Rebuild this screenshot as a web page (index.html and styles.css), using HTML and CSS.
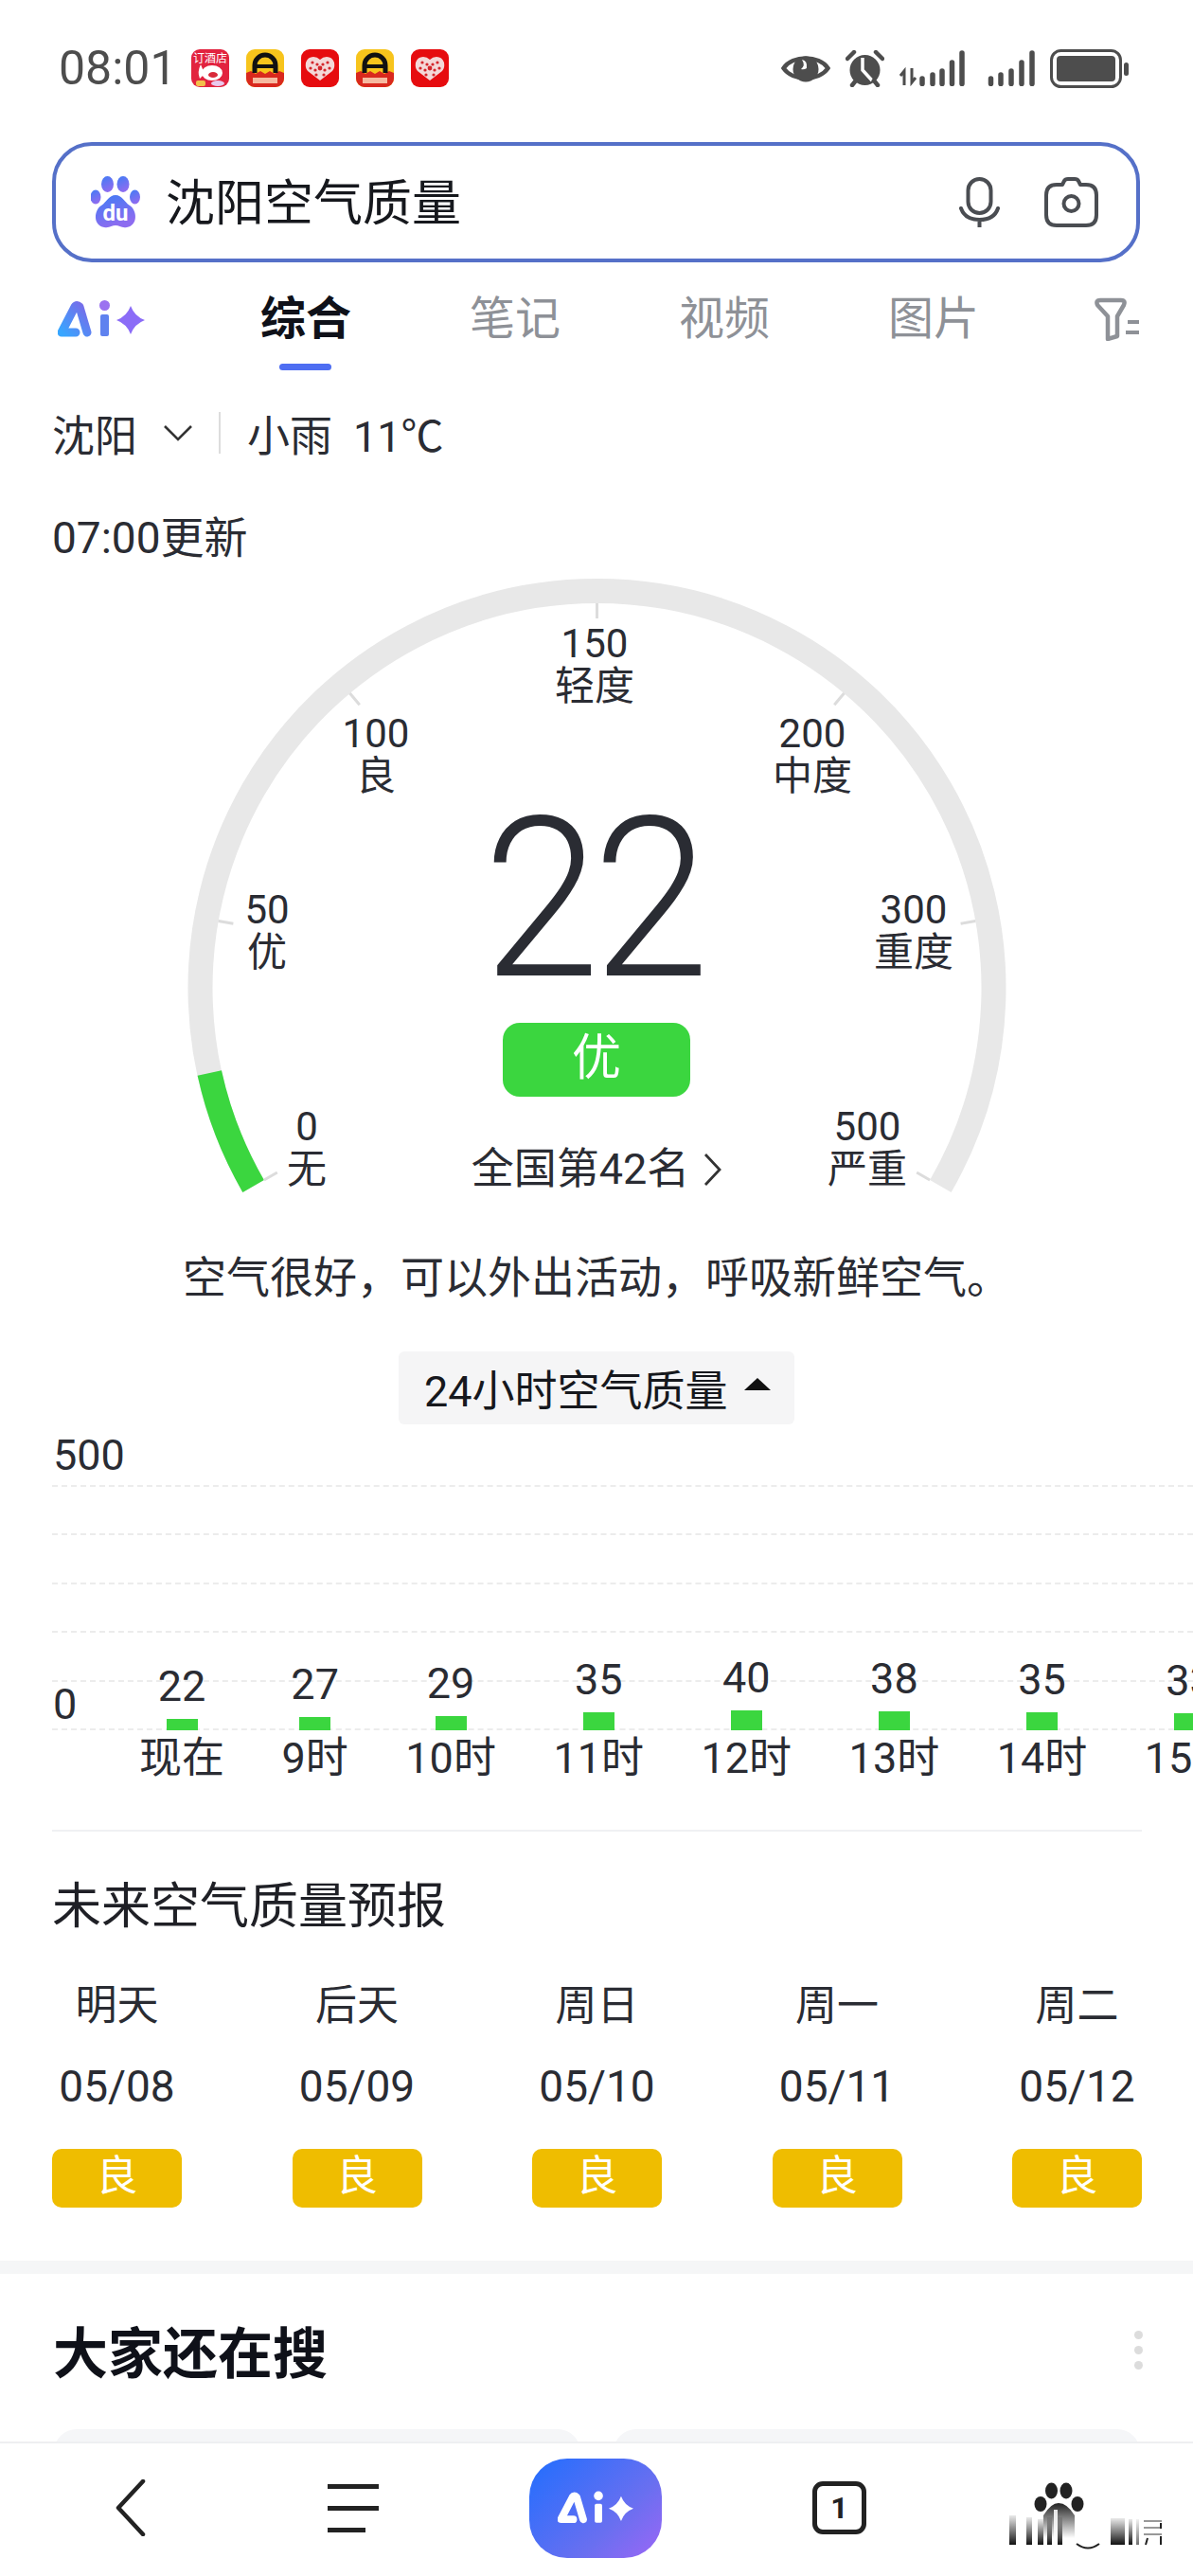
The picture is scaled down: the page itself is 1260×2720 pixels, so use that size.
FILE: index.html
```html
<!DOCTYPE html>
<html lang="zh">
<head>
<meta charset="utf-8">
<meta name="viewport" content="width=device-width, initial-scale=1">
<title>沈阳空气质量</title>
<link rel="stylesheet" href="styles.css">
</head>
<body>

<svg class="defs" width="0" height="0">
  <defs>
    <linearGradient id="aiGrad" x1="0" y1="1" x2="1" y2="0">
      <stop offset="0" stop-color="#38a6ff"/>
      <stop offset="1" stop-color="#7a68e8"/>
    </linearGradient>
    <linearGradient id="duGrad" x1="0" y1="0" x2="0.4" y2="1">
      <stop offset="0" stop-color="#3f7cf5"/>
      <stop offset="1" stop-color="#8d6cf0"/>
    </linearGradient>
    <linearGradient id="fadeDown" x1="0" y1="0" x2="0" y2="1">
      <stop offset="0" stop-color="#222" stop-opacity="0.1"/>
      <stop offset="1" stop-color="#111" stop-opacity="1"/>
    </linearGradient>
    <linearGradient id="fadeUp" x1="0" y1="0" x2="0" y2="1">
      <stop offset="0" stop-color="#222" stop-opacity="1"/>
      <stop offset="1" stop-color="#222" stop-opacity="0"/>
    </linearGradient>
    <symbol id="appTaxi" viewBox="0 0 40 40">
      <rect width="40" height="40" rx="9" fill="#f7c41c"/>
      <path d="M0 25 L5 23 L10 26 L15 23 L20 26 L25 23 L30 26 L35 23 L40 25 V31 A9 9 0 0 1 31 40 H9 A9 9 0 0 1 0 31Z" fill="#d9281e"/>
      <path d="M9 25 V17 A11 11 0 0 1 31 17 V25" fill="none" stroke="#111" stroke-width="5"/>
      <rect x="11" y="16" width="18" height="4" fill="#111"/>
      <rect x="7" y="30" width="26" height="6" fill="#f6b9a0"/>
    </symbol>
    <symbol id="appHeart" viewBox="0 0 40 40">
      <rect width="40" height="40" rx="9" fill="#e60c0f"/>
      <path d="M20 33 L7 23 Q4 20 5 14 Q7 8 13 8 Q17 8 20 11 Q23 8 27 8 Q33 8 35 14 Q36 20 33 23Z" fill="#f4d8d8"/>
      <g fill="#d3262b">
        <circle cx="12" cy="14" r="1.6"/><circle cx="17" cy="16" r="1.6"/><circle cx="23" cy="16" r="1.6"/><circle cx="28" cy="14" r="1.6"/>
        <circle cx="10" cy="20" r="1.6"/><circle cx="15" cy="22" r="1.6"/><circle cx="20" cy="20" r="2.4"/><circle cx="25" cy="22" r="1.6"/><circle cx="30" cy="20" r="1.6"/>
        <circle cx="16" cy="27" r="1.6"/><circle cx="24" cy="27" r="1.6"/>
      </g>
    </symbol>
  </defs>
</svg>

<main class="page">

  <div class="status">
    <span class="time">08:01</span>
    <div class="apps">
      <svg class="app" viewBox="0 0 40 40">
        <rect width="40" height="40" rx="9" fill="#e2233f"/>
        <text class="app-text" x="20" y="14" text-anchor="middle">订酒店</text>
        <ellipse cx="22" cy="25" rx="11" ry="8" fill="#fff"/>
        <path d="M10 16 Q6 24 9 31 L14 26Z" fill="#fff"/>
        <ellipse cx="23" cy="27" rx="5" ry="3" fill="#d92a3a"/>
        <rect x="5" y="33" width="10" height="6" rx="2" fill="#f3c04a"/>
        <ellipse cx="28" cy="36" rx="7" ry="3" fill="#e9c8ec"/>
      </svg>
      <svg class="app"><use href="#appTaxi"/></svg>
      <svg class="app"><use href="#appHeart"/></svg>
      <svg class="app"><use href="#appTaxi"/></svg>
      <svg class="app"><use href="#appHeart"/></svg>
    </div>
    <div class="sys">
      <svg class="ic-eye" viewBox="0 0 52 34">
        <path d="M2.5 17 C12 3 40 3 49.5 17 C40 31 12 31 2.5 17Z" fill="none" stroke="#4d4d4d" stroke-width="4.5"/>
        <circle cx="26" cy="18" r="13.5" fill="#4d4d4d"/>
        <path d="M22 8 Q28 9 27 17 Q24 19 21 18 Q26 14 22 8Z" fill="#fff"/>
      </svg>
      <svg class="ic-alarm" viewBox="0 0 41 39">
        <circle cx="20.5" cy="21" r="16" fill="#4d4d4d"/>
        <path d="M18 8 V21 L28 32" fill="none" stroke="#fff" stroke-width="3.5"/>
        <path d="M2 9 L9 2 M39 9 L32 2 M7 37 L11 32 M34 37 L30 32" stroke="#4d4d4d" stroke-width="4.5" stroke-linecap="round"/>
      </svg>
      <svg class="ic-sig1" viewBox="0 0 70 38">
        <path d="M5 37 V22 L1 27 M13 19 V34 L17 29" fill="none" stroke="#4d4d4d" stroke-width="3"/>
        <path d="M24 30 V35.5 M35 26 V35.5 M45 22 V35.5 M55.5 13 V35.5 M66 3 V35.5" stroke="#4d4d4d" stroke-width="5.5" stroke-linecap="round"/>
      </svg>
      <svg class="ic-sig2" viewBox="0 0 50 38">
        <path d="M3.5 30 V35.5 M14 26 V35.5 M25 22 V35.5 M36 13 V35.5 M47 3 V35.5" stroke="#4d4d4d" stroke-width="5.5" stroke-linecap="round"/>
      </svg>
      <svg class="ic-batt" viewBox="0 0 83 41">
        <rect x="1.5" y="1.5" width="73" height="38" rx="10" fill="none" stroke="#4d4d4d" stroke-width="3"/>
        <rect x="7" y="7" width="62" height="27" rx="4" fill="#4d4d4d"/>
        <rect x="78" y="14" width="5" height="14" rx="2.5" fill="#4d4d4d"/>
      </svg>
    </div>
  </div>

  <div class="searchbox">
    <svg class="du" viewBox="0 0 52 55">
      <g fill="url(#duGrad)">
        <ellipse cx="17.5" cy="8.5" rx="6.5" ry="8.5"/>
        <ellipse cx="34" cy="8.5" rx="6.5" ry="8.5"/>
        <ellipse cx="5" cy="22" rx="5.5" ry="7.5"/>
        <ellipse cx="46.5" cy="22" rx="5.5" ry="7.5"/>
        <path d="M26 20 C33 20 35 27 41 31 C49 36 50 52 38 54 C32 55 30 52 26 52 C22 52 20 55 14 54 C2 52 3 36 11 31 C17 27 19 20 26 20Z"/>
      </g>
      <text class="du-text" x="26" y="47" text-anchor="middle">du</text>
    </svg>
    <span class="query">沈阳空气质量</span>
    <svg class="mic" viewBox="0 0 43 53">
      <rect x="9.5" y="2" width="24" height="36" rx="12" fill="none" stroke="#4a4d52" stroke-width="4"/>
      <path d="M2 33 Q6 45 21.5 45 Q37 45 41 33 M21.5 45 V53" fill="none" stroke="#4a4d52" stroke-width="4" stroke-linecap="round"/>
    </svg>
    <svg class="cam" viewBox="0 0 57 53">
      <path d="M19 8 L21 4 Q22 2 25 2 H32 Q35 2 36 4 L38 8 H44 Q55 8 55 19 V40 Q55 51 44 51 H13 Q2 51 2 40 V19 Q2 8 13 8Z" fill="none" stroke="#4a4d52" stroke-width="4" stroke-linejoin="round"/>
      <circle cx="28.5" cy="28" r="8" fill="none" stroke="#4a4d52" stroke-width="4"/>
    </svg>
  </div>

  <nav class="tabs">
    <svg class="ai-logo" viewBox="0 0 92 40">
      <path d="M19 34 H4 L18 7 Q20 4 23 7 L31 34" fill="none" stroke="url(#aiGrad)" stroke-width="9" stroke-linejoin="round" stroke-linecap="round"/>
      <rect x="45" y="15" width="9" height="23" rx="2" fill="#5f82ef"/>
      <circle cx="49.5" cy="5.5" r="5.5" fill="#9b72f0"/>
      <path d="M77 6 Q81 17 92 21 Q81 25 77 36 Q73 25 62 21 Q73 17 77 6Z" fill="#8b6cf7"/>
    </svg>
    <a class="tab active">综合</a>
    <a class="tab">笔记</a>
    <a class="tab">视频</a>
    <a class="tab">图片</a>
    <svg class="filter" viewBox="0 0 47 46">
      <path d="M6 3 H28 Q33 3 31 8 L24 20 V41 L14 44 V20 L3 8 Q1 3 6 3Z" fill="none" stroke="#8e9197" stroke-width="4.5" stroke-linejoin="round"/>
      <path d="M35 26 H47 M33 37 H47" stroke="#8e9197" stroke-width="4"/>
    </svg>
  </nav>

  <div class="weather">
    <span>沈阳</span>
    <svg class="arrow-down" viewBox="0 0 32 18"><path d="M2 2 L16 16 L30 2" fill="none" stroke="#333" stroke-width="2.6"/></svg>
    <i class="weather-sep"></i>
    <span>小雨</span>
    <span class="temp">11℃</span>
  </div>

  <div class="updated">07:00更新</div>

  <div class="gauge">
    <svg class="gauge-arc" viewBox="0 0 1260 680">
      <path d="M267.6 652.5 A419 419 0 1 1 993.4 652.5" fill="none" stroke="#e8e8e8" stroke-width="26"/>
      <path d="M267.6 652.5 A419 419 0 0 1 221.3 533" fill="none" stroke="#3bd63f" stroke-width="26"/>
      <path d="M278.9 646 L292.8 638 M230.7 372.5 L246.4 375.3 M369.5 132 L379.8 144.2 M630.5 37 V53 M891.5 132 L881.2 144.2 M1030.3 372.5 L1014.6 375.3 M982.1 646 L968.2 638" stroke="#dcdcdc" stroke-width="3"/>
    </svg>

    <div class="mark mark-150">150<br>轻度</div>
    <div class="mark mark-100">100<br>良</div>
    <div class="mark mark-200">200<br>中度</div>
    <div class="mark mark-50">50<br>优</div>
    <div class="mark mark-300">300<br>重度</div>
    <div class="mark mark-0">0<br>无</div>
    <div class="mark mark-500">500<br>严重</div>

    <div class="gauge-center">
      <div class="aqi">22</div>
      <div class="aqi-badge">优</div>
      <div class="rank">全国第42名
        <svg class="rank-arrow" viewBox="0 0 20 36"><path d="M3 2 L18 18 L3 34" fill="none" stroke="#333" stroke-width="2.8"/></svg>
      </div>
    </div>
  </div>

  <p class="advice">空气很好&#xFF0C;可以外出活动&#xFF0C;呼吸新鲜空气。</p>

  <div class="drop">24小时空气质量<i class="drop-tri"></i></div>

  <div class="chart">
    <div class="grid-lines"><i></i><i></i><i></i><i></i><i></i><i></i></div>
    <span class="y-label y-top">500</span>
    <span class="y-label y-zero">0</span>
    <div class="hours">
      <div class="hour"><span class="val">22</span><i class="bar bar-22"></i><span class="hr">现在</span></div>
      <div class="hour"><span class="val">27</span><i class="bar bar-27"></i><span class="hr">9时</span></div>
      <div class="hour"><span class="val">29</span><i class="bar bar-29"></i><span class="hr">10时</span></div>
      <div class="hour"><span class="val">35</span><i class="bar bar-35"></i><span class="hr">11时</span></div>
      <div class="hour"><span class="val">40</span><i class="bar bar-40"></i><span class="hr">12时</span></div>
      <div class="hour"><span class="val">38</span><i class="bar bar-38"></i><span class="hr">13时</span></div>
      <div class="hour"><span class="val">35</span><i class="bar bar-35"></i><span class="hr">14时</span></div>
      <div class="hour"><span class="val">33</span><i class="bar bar-33"></i><span class="hr">15时</span></div>
    </div>
  </div>

  <div class="rule"></div>

  <h2 class="forecast-title">未来空气质量预报</h2>
  <div class="forecast">
    <div class="day"><span>明天</span><span class="date">05/08</span><span class="level">良</span></div>
    <div class="day"><span>后天</span><span class="date">05/09</span><span class="level">良</span></div>
    <div class="day"><span>周日</span><span class="date">05/10</span><span class="level">良</span></div>
    <div class="day"><span>周一</span><span class="date">05/11</span><span class="level">良</span></div>
    <div class="day"><span>周二</span><span class="date">05/12</span><span class="level">良</span></div>
  </div>

  <div class="band"></div>

  <div class="also-head">
    <h2 class="also-title">大家还在搜</h2>
    <div class="dots"><i></i><i></i><i></i></div>
  </div>
  <div class="also-cards"><div class="card"></div><div class="card"></div></div>

</main>

<footer class="bottom">
  <svg class="nav-back" viewBox="0 0 32 60"><path d="M29 2 L3 30 L29 58" fill="none" stroke="#222" stroke-width="4.5" stroke-linecap="round" stroke-linejoin="round"/></svg>
  <div class="nav-menu"><i></i><i></i><i class="short"></i></div>
  <div class="nav-ai">
    <svg viewBox="0 0 92 40">
      <path d="M19 34 H4 L18 7 Q20 4 23 7 L31 34" fill="none" stroke="#fff" stroke-width="9" stroke-linejoin="round" stroke-linecap="round"/>
      <rect x="45" y="15" width="9" height="23" rx="2" fill="#fff"/>
      <circle cx="49.5" cy="5.5" r="5.5" fill="#fff"/>
      <path d="M77 6 Q81 17 92 21 Q81 25 77 36 Q73 25 62 21 Q73 17 77 6Z" fill="#fff"/>
    </svg>
  </div>
  <div class="nav-tab">1</div>

  <!-- paw with the blurred watermark on top -->
  <svg class="nav-paw" viewBox="0 0 210 110">
    <g fill="#222">
      <ellipse cx="59" cy="44" rx="6.5" ry="8"/>
      <ellipse cx="70.5" cy="30" rx="6.5" ry="8.5"/>
      <ellipse cx="86" cy="30" rx="6.5" ry="8.5"/>
      <ellipse cx="98" cy="44" rx="6.5" ry="8"/>
    </g>
    <path d="M62 56 Q70 43 78 43 Q87 43 95 56 V80 H62Z" fill="url(#fadeUp)"/>
    <rect x="73" y="50" width="4" height="36" fill="#fff" opacity="0.85"/>
    <rect x="26" y="56" width="7" height="31" fill="url(#fadeDown)"/>
    <rect x="44" y="58" width="6" height="29" fill="url(#fadeDown)"/>
    <rect x="56" y="60" width="6" height="27" fill="url(#fadeDown)"/>
    <rect x="66" y="58" width="5" height="29" fill="url(#fadeDown)"/>
    <rect x="77" y="58" width="5" height="29" fill="url(#fadeDown)"/>
    <path d="M97 86 Q109 95 121 86" fill="none" stroke="#222" stroke-width="2"/>
    <rect x="133" y="59" width="15" height="28" fill="url(#fadeDown)"/>
    <rect x="152" y="60" width="4" height="27" fill="url(#fadeDown)"/>
    <rect x="160" y="60" width="3" height="27" fill="url(#fadeDown)" opacity="0.6"/>
    <path d="M168 62 H187 M168 69 H187 M168 76 H187" stroke="#555" stroke-width="2" opacity="0.6"/>
    <path d="M172 80 L170 87 M186 64 V70 M186 78 V87" stroke="#222" stroke-width="2"/>
  </svg>
</footer>

</body>
</html>
```

FILE: styles.css
```css
* { box-sizing: border-box; }

html, body {
    margin: 0;
    height: 2720px;
    overflow: hidden;
}

body {
    display: flex;
    flex-direction: column;
    position: relative;
    width: 1260px;
    background: #fff;
    color: #2a2c33;
    font-family: Roboto, "Noto Sans CJK SC", sans-serif;
}

.defs { position: absolute; }

.page {
    flex: 1;
    min-height: 0;
    overflow: hidden;
}

/* Status bar */
.status {
    display: flex;
    align-items: center;
    height: 150px;
    padding: 52px 68px 58px 62px;
}

.time {
    font-size: 50px;
    line-height: 40px;
    color: #4d4d4d;
}

.apps {
    display: flex;
    gap: 18px;
    margin-left: 15px;
}

.app { width: 40px; height: 40px; }

.app-text {
    font-size: 12px;
    fill: #fff;
}

.sys {
    display: flex;
    align-items: center;
    gap: 16px;
    margin-left: auto;
}

.ic-eye { width: 52px; height: 34px; }
.ic-alarm { width: 41px; height: 39px; }
.ic-sig1 { width: 70px; height: 38px; }
.ic-sig2 { width: 50px; height: 38px; margin-left: 7px; }
.ic-batt { width: 83px; height: 41px; }

/* Search box */
.searchbox {
    display: flex;
    align-items: center;
    height: 127px;
    margin: 0 56px 0 55px;
    padding: 0 40px 0 37px;
    border: 4px solid #5570c8;
    border-radius: 42px;
}

.du { width: 52px; height: 55px; }

.du-text {
    font-size: 24px;
    font-weight: 700;
    fill: #fff;
}

.query {
    margin: -6px 0 0 27px;
    font-size: 52px;
    color: #16181d;
}

.mic { width: 43px; height: 53px; margin-left: auto; }
.cam { width: 57px; height: 53px; margin-left: 47px; }

/* Tabs */
.tabs {
    display: flex;
    align-items: center;
    gap: 125px;
    height: 153px;
    padding: 2px 56px 36px 61px;
    overflow: hidden;
}

.ai-logo {
    flex-shrink: 0;
    width: 92px;
    height: 40px;
    margin-right: -3px;
}

.tab {
    position: relative;
    flex-shrink: 0;
    font-size: 48px;
    line-height: 56px;
    color: #8e9197;
}

.tab.active {
    font-weight: 700;
    color: #0f1119;
}

.tab.active::after {
    content: "";
    position: absolute;
    left: 20px;
    bottom: -26px;
    width: 55px;
    height: 7px;
    border-radius: 4px;
    background: #4e6ef2;
}

.filter {
    flex-shrink: 0;
    width: 47px;
    height: 46px;
    margin-left: -3px;
}

/* Weather line */
.weather {
    display: flex;
    align-items: center;
    height: 60px;
    padding: 0 0 6px 55px;
    font-size: 45px;
    color: #2a2c33;
}

.arrow-down { width: 32px; height: 18px; margin-left: 27px; }

.weather-sep {
    width: 2px;
    height: 44px;
    margin: 0 28px 0 27px;
    background: #ddd;
}

.temp { margin-left: 22px; }

.updated {
    margin-top: 55px;
    padding-left: 55px;
    font-size: 46px;
    line-height: 46px;
}

/* Gauge */
.gauge {
    position: relative;
    height: 681px;
    margin-top: 9px;
}

.gauge-arc {
    display: block;
    width: 1260px;
    height: 680px;
}

.mark {
    position: absolute;
    width: 120px;
    font-size: 42px;
    line-height: 45px;
    text-align: center;
}

.mark-150 { left: 568px; top: 57px; }
.mark-100 { left: 337px; top: 152px; }
.mark-200 { left: 798px; top: 152px; }
.mark-50 { left: 222px; top: 338px; }
.mark-300 { left: 905px; top: 338px; }
.mark-0 { left: 264px; top: 567px; }
.mark-500 { left: 856px; top: 567px; }

.gauge-center {
    position: absolute;
    top: 231px;
    left: 0;
    width: 1260px;
    display: flex;
    flex-direction: column;
    align-items: center;
}

.aqi {
    margin: 3px 0 -3px -8px;
    font-size: 236px;
    line-height: 232px;
    font-weight: 300;
    letter-spacing: -8px;
    transform: scaleX(0.94);
}

.aqi-badge {
    width: 198px;
    height: 78px;
    margin-top: 17px;
    border-radius: 18px;
    background: #3bd63f;
    color: #fff;
    font-size: 52px;
    line-height: 76px;
    text-align: center;
}

.rank {
    display: flex;
    align-items: center;
    gap: 14px;
    margin-top: 52px;
    font-size: 45px;
    line-height: 50px;
}

.rank-arrow { width: 20px; height: 36px; }

.advice {
    margin: 38px 0 0;
    font-size: 46px;
    line-height: 60px;
    text-align: center;
}

.drop {
    display: flex;
    align-items: center;
    width: 418px;
    height: 77px;
    margin: 48px auto 0;
    padding-left: 27px;
    border-radius: 6px;
    background: #f5f5f6;
    font-size: 45px;
    color: #16181d;
}

.drop-tri {
    width: 0;
    height: 0;
    margin: -8px 0 0 17px;
    border-left: 14px solid transparent;
    border-right: 14px solid transparent;
    border-bottom: 13px solid #111;
}

/* 24h chart */
.chart {
    position: relative;
    height: 378px;
}

.grid-lines {
    position: absolute;
    left: 55px;
    right: 0;
    top: 64px;
    height: 259px;
    display: flex;
    flex-direction: column;
    justify-content: space-between;
}

.grid-lines i {
    display: block;
    border-top: 2px dashed #ececec;
}

.y-label {
    position: absolute;
    left: 56px;
    font-size: 45px;
    line-height: 50px;
}

.y-top { top: 8px; }
.y-zero { top: 271px; }

.hours {
    position: relative;
    display: flex;
    align-items: flex-end;
    gap: 60.5px;
    height: 378px;
    padding-left: 147px;
}

.hour {
    display: flex;
    flex-direction: column;
    align-items: center;
    flex-shrink: 0;
    white-space: nowrap;
}

.val {
    margin-bottom: 12px;
    font-size: 45px;
    line-height: 44px;
}

.bar {
    display: block;
    width: 33px;
    background: #3bd63f;
}

.bar-22 { height: 12px; }
.bar-27 { height: 14px; }
.bar-29 { height: 15px; }
.bar-33 { height: 18px; }
.bar-35 { height: 19px; }
.bar-38 { height: 20px; }
.bar-40 { height: 21px; }

.hr {
    margin-top: 5px;
    font-size: 45px;
    line-height: 50px;
}

.rule {
    height: 2px;
    margin: 50px 54px 0 55px;
    background: #f0f1f3;
}

/* Forecast */
.forecast-title {
    margin: 50px 0 0;
    padding-left: 55px;
    font-size: 52px;
    line-height: 60px;
    font-weight: 400;
    color: #1f2026;
}

.forecast {
    display: flex;
    justify-content: space-between;
    margin-top: 49px;
    padding: 0 54px 0 55px;
}

.day {
    display: flex;
    flex-direction: column;
    align-items: center;
    width: 137px;
    font-size: 44px;
    line-height: 50px;
}

.date {
    margin-top: 35px;
    font-size: 46px;
}

.level {
    width: 137px;
    height: 62px;
    margin-top: 41px;
    border-radius: 10px;
    background: #efbd00;
    color: #fff;
    font-size: 44px;
    line-height: 58px;
    text-align: center;
}

.band {
    height: 14px;
    margin-top: 56px;
    background: #f5f6f7;
}

/* Also searched */
.also-head {
    display: flex;
    align-items: center;
    justify-content: space-between;
    height: 70px;
    margin-top: 45px;
    padding: 0 53px 0 56px;
}

.also-title {
    margin: 0;
    font-size: 58px;
    font-weight: 700;
    color: #0f1119;
}

.dots {
    display: flex;
    flex-direction: column;
    gap: 7px;
}

.dots i {
    display: block;
    width: 9px;
    height: 9px;
    border-radius: 50%;
    background: #dcdcdc;
}

.also-cards {
    display: flex;
    gap: 35px;
    margin-top: 49px;
    padding: 0 56px 0 57px;
}

.card {
    flex: 1;
    height: 200px;
    border-radius: 24px;
    background: #f5f6f8;
}

/* Bottom bar */
.bottom {
    position: relative;
    display: flex;
    align-items: center;
    flex-shrink: 0;
    height: 142px;
    padding: 0 0 4px 122px;
    border-top: 2px solid #eeeff1;
    background: #fff;
}

.nav-back { width: 32px; height: 60px; }

.nav-menu {
    display: flex;
    flex-direction: column;
    gap: 18px;
    width: 54px;
    margin-left: 192px;
}

.nav-menu i {
    display: block;
    height: 5px;
    background: #222;
}

.nav-menu i.short { width: 40px; }

.nav-ai {
    display: flex;
    align-items: center;
    justify-content: center;
    width: 140px;
    height: 105px;
    margin-left: 159px;
    border-radius: 40px;
    background: linear-gradient(135deg, #2c6efc 10%, #6a6ff0 65%, #9c66f6 100%);
}

.nav-ai svg { width: 80px; height: 36px; }

.nav-tab {
    width: 57px;
    height: 56px;
    margin-left: 159px;
    border: 5px solid #222;
    border-radius: 11px;
    color: #222;
    font-size: 32px;
    font-weight: 700;
    line-height: 46px;
    text-align: center;
}

.nav-paw {
    position: absolute;
    right: 10px;
    bottom: 10px;
    width: 210px;
    height: 110px;
}
```
